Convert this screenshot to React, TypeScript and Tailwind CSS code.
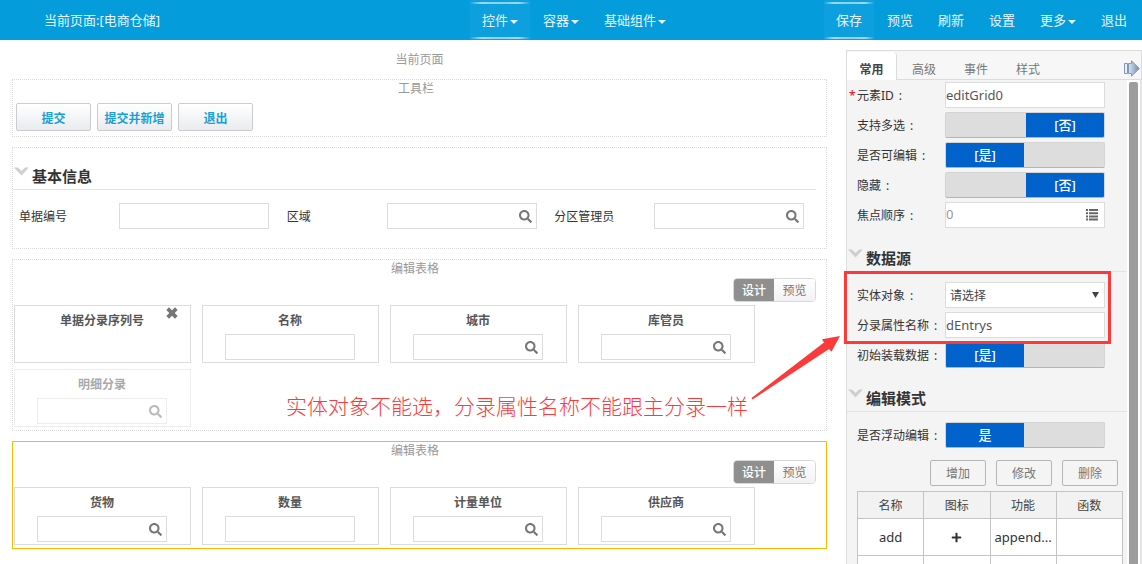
import React from "react";
import { FaSearch, FaPlus } from "react-icons/fa";

function Caret() {
  return (
    <svg className="mt-0.5 ml-0.5 h-1 w-2" viewBox="0 0 8 4" fill="currentColor" aria-hidden="true">
      <path d="M0 0H8L4 4Z" />
    </svg>
  );
}

function Chevron() {
  return (
    <svg className="mt-2 ml-px h-[9px] w-[15px] shrink-0" viewBox="0 0 15 9" fill="#cfcfcf" aria-hidden="true">
      <path d="M0 .5H4L7.500 4L11 .5H15L7.500 8.500Z" />
    </svg>
  );
}

function CrossIcon() {
  return (
    <svg className="h-3 w-3" viewBox="0 0 12 12" fill="currentColor" aria-hidden="true">
      <path d="M3 .3L6 3.300L9 .3L11.700 3L8.700 6L11.700 9L9 11.700L6 8.700L3 11.700L.3 9L3.300 6L.3 3Z" />
    </svg>
  );
}

function ListIcon() {
  return (
    <svg className="h-3 w-3 shrink-0" viewBox="0 0 12 12" fill="#666" aria-hidden="true">
      <path d="M0 0H2V2H0ZM3 0H12V2H3ZM0 3.200H2V5.200H0ZM3 3.200H12V5.200H3ZM0 6.400H2V8.400H0ZM3 6.400H12V8.400H3ZM0 9.600H2V11.600H0ZM3 9.600H12V11.600H3Z" />
    </svg>
  );
}

function NavItem({ label, active, caret }: { label: string; active?: boolean; caret?: boolean }) {
  return (
    <button
      type="button"
      className={
        active
          ? "relative flex h-10 items-center bg-[#0d9fde] px-3 pt-0.5 text-[#e6f5fc]"
          : "flex h-10 items-center px-3 pt-0.5 text-[#e6f5fc]"
      }
    >
      {active && (
        <>
          <span className="absolute inset-x-0 top-[2px] h-[2px] bg-linear-to-r from-transparent via-[#9fdcf7] via-20% to-transparent" />
          <span className="absolute inset-x-0 top-[2px] h-[2px] bg-linear-to-l from-transparent via-[#9fdcf7] via-20% to-transparent" />
          <span className="absolute inset-x-0 bottom-px h-[2px] bg-linear-to-r from-transparent via-[#9fdcf7] via-20% to-transparent" />
          <span className="absolute inset-x-0 bottom-px h-[2px] bg-linear-to-l from-transparent via-[#9fdcf7] via-20% to-transparent" />
        </>
      )}
      {label}
      {caret && <Caret />}
    </button>
  );
}

function Field({ label, lookup, width }: { label: string; lookup?: boolean; width: string }) {
  return (
    <div className={`flex h-[26px] items-center border border-[#dcdcdc] bg-white ${width}`}>
      <input aria-label={label} className="h-full w-full min-w-0 flex-1 bg-transparent px-1 outline-none" />
      {lookup && (
        <button type="button" aria-label={`${label}查询`} className="pr-1 text-[#777]">
          <FaSearch className="h-[13px] w-[13px]" />
        </button>
      )}
    </div>
  );
}

function Card({ title, kind, faded, closable }: { title: string; kind?: "text" | "lookup"; faded?: boolean; closable?: boolean }) {
  return (
    <div
      className={
        faded
          ? "relative flex h-[58px] w-[177px] flex-col items-center border border-[#dcdcdc] pr-px opacity-50"
          : "relative flex h-[58px] w-[177px] flex-col items-center border border-[#dcdcdc] pr-px"
      }
    >
      <div className="h-7 text-xs leading-[30px] font-bold text-[#555]">{title}</div>
      {kind && <Field label={title} lookup={kind === "lookup"} width="w-[130px]" />}
      {closable && (
        <button type="button" aria-label="删除列" className="absolute top-px right-3 text-[#777]">
          <CrossIcon />
        </button>
      )}
    </div>
  );
}

type Column = { title: string; kind?: "text" | "lookup"; faded?: boolean; closable?: boolean };

function EditGrid({ columns, selected }: { columns: Column[]; selected?: boolean }) {
  return (
    <section
      className={
        selected
          ? "mt-2.5 border border-[#fdb900] pr-2.5 pb-[3px] pl-px"
          : "mt-2.5 border border-dotted border-[#d8d8d8] pr-2.5 pb-[3px] pl-px"
      }
    >
      <div className="text-center text-xs leading-[18px] text-[#999]">编辑表格</div>
      <div className="flex justify-end">
        <div className="flex h-6 overflow-hidden rounded border border-[#d8d8d8] text-xs">
          <button type="button" className="w-10 bg-[#8f8f8f] pt-0.5 font-medium text-white">设计</button>
          <button type="button" className="w-[41px] bg-linear-to-b from-white to-[#f3f1f4] pt-0.5 text-[#777]">预览</button>
        </div>
      </div>
      <div className="mt-[3px] flex flex-wrap gap-x-[11px] gap-y-1.5">
        {columns.map((c) => (
          <Card key={c.title} {...c} />
        ))}
      </div>
    </section>
  );
}

function Row({ label, id, required, children }: { label: string; id: string; required?: boolean; children: React.ReactNode }) {
  return (
    <div className="mb-1 flex h-[26px] items-center">
      <label htmlFor={id} className="flex w-[98px] shrink-0 pt-0.5 text-[#333]">
        <span className="w-2.5 pl-0.5 text-red-600">{required ? "*" : ""}</span>
        <span className="whitespace-nowrap">{label}</span>
        <span className="ml-[5px]">:</span>
      </label>
      {children}
    </div>
  );
}

function Toggle({ id, on, text }: { id: string; on?: boolean; text: string }) {
  return (
    <button
      id={id}
      type="button"
      role="switch"
      aria-checked={!!on}
      className="flex h-[26px] w-40 overflow-hidden rounded-xs border border-[#d4d4d4] border-b-[#b4b4b4] bg-[#dddddd] text-[13px] leading-6 font-medium text-white"
    >
      {on ? (
        <span className="h-6 w-[78px] bg-[#0262cc]">{text}</span>
      ) : (
        <span className="ml-auto h-6 w-[78px] bg-[#0262cc]">{text}</span>
      )}
    </button>
  );
}

function PanelHeading({ title }: { title: string }) {
  return (
    <div className="mb-2.5 flex h-10 items-start border-b border-[#e3e3e3] pt-[9px]">
      <Chevron />
      <h2 className="ml-[3px] text-[15px] leading-[34px] font-bold text-[#333]">{title}</h2>
    </div>
  );
}

const inputClass = "h-[26px] w-40 border border-[#dcdcdc] bg-white text-[13px] text-[#555] outline-none";
const tabs = ["常用", "高级", "事件", "样式"];

function PropertyPanel() {
  return (
    <aside className="flex w-[296px] shrink-0 flex-col border-t border-l border-[#dcdcdc] bg-[#f7f7f7]">
      <div className="flex h-[29px] items-end border-r border-b border-[#dcdcdc]">
        {tabs.map((t, i) => (
          <button
            key={t}
            type="button"
            className={
              i === 0
                ? "-mb-px h-7 w-[50px] rounded-t border-r border-[#dcdcdc] bg-white pt-2 text-xs font-bold text-[#444]"
                : "-mb-px ml-0.5 h-7 w-[50px] pt-2 text-xs text-[#777]"
            }
          >
            {t}
          </button>
        ))}
        <button type="button" aria-label="收起" className="mr-px mb-0.5 ml-auto">
          <svg className="h-[17px] w-[17px]" viewBox="0 0 17 17" aria-hidden="true">
            <defs>
              <linearGradient id="arrow" x1="0" x2="1">
                <stop offset="0" stopColor="#d8e4f0" />
                <stop offset="1" stopColor="#6f8bae" />
              </linearGradient>
            </defs>
            <path d="M1.500 3.500H4.500V13.500H1.500Z" fill="#e3f0fb" stroke="#8497b5" />
            <path d="M5.500 3.500H8.500V.8L16.300 8.500L8.500 16.200V13.500H5.500Z" fill="url(#arrow)" stroke="#8497b5" />
          </svg>
        </button>
      </div>
      <div className="flex min-h-0 flex-1">
        <div className="min-w-0 flex-1 bg-[#f4f4f4] pt-0.5 text-xs">
          <Row label="元素ID" id="element-id" required>
            <input id="element-id" defaultValue="editGrid0" className={inputClass} />
          </Row>
          <Row label="支持多选" id="multi">
            <Toggle id="multi" text="[否]" />
          </Row>
          <Row label="是否可编辑" id="editable">
            <Toggle id="editable" on text="[是]" />
          </Row>
          <Row label="隐藏" id="hidden">
            <Toggle id="hidden" text="[否]" />
          </Row>
          <Row label="焦点顺序" id="order">
            <div className="flex h-[26px] w-40 items-center border border-[#dcdcdc] bg-white pr-1.5">
              <input id="order" defaultValue="0" className="min-w-0 flex-1 bg-transparent text-[13px] text-[#999] outline-none" />
              <ListIcon />
            </div>
          </Row>
          <PanelHeading title="数据源" />
          <Row label="实体对象" id="entity">
            <div className="relative">
              <select id="entity" className="h-[26px] w-40 appearance-none border border-[#dcdcdc] bg-white pt-0.5 pl-1 text-xs text-[#444] outline-none">
                <option>请选择</option>
              </select>
              <svg className="pointer-events-none absolute top-[10px] right-1.5 h-1.5 w-[7px]" viewBox="0 0 7 6" fill="#444" aria-hidden="true">
                <path d="M0 0H7L3.5 6Z" />
              </svg>
            </div>
          </Row>
          <Row label="分录属性名称" id="entry-name">
            <input id="entry-name" defaultValue="dEntrys" className={inputClass} />
          </Row>
          <Row label="初始装载数据" id="preload">
            <Toggle id="preload" on text="[是]" />
          </Row>
          <PanelHeading title="编辑模式" />
          <Row label="是否浮动编辑" id="floating">
            <Toggle id="floating" on text="是" />
          </Row>
          <div className="mt-3 mr-[9px] flex justify-end gap-2.5">
            {["增加", "修改", "删除"].map((b) => (
              <button key={b} type="button" className="h-[26px] w-14 rounded-xs border border-[#b5b5b5] pt-0.5 text-xs text-[#777]">
                {b}
              </button>
            ))}
          </div>
          <table className="mt-[5px] ml-2.5 w-[266px] table-fixed border-collapse text-center text-[#333]">
            <thead>
              <tr className="h-[27px] bg-[#f2f2f2]">
                {["名称", "图标", "功能", "函数"].map((h) => (
                  <th key={h} className="border border-[#c4c4c4] pt-0.5 font-normal text-[#444]">{h}</th>
                ))}
              </tr>
            </thead>
            <tbody className="bg-white text-[13px]">
              <tr className="h-[37px]">
                <td className="border border-[#c4c4c4] pt-0.5">add</td>
                <td className="border border-[#c4c4c4]">
                  <FaPlus className="mx-auto h-[11px] w-[11px]" />
                </td>
                <td className="border border-[#c4c4c4] pt-0.5">append...</td>
                <td className="border border-[#c4c4c4]" />
              </tr>
              <tr className="h-[37px]">
                <td className="border border-[#c4c4c4]" />
                <td className="border border-[#c4c4c4]" />
                <td className="border border-[#c4c4c4]" />
                <td className="border border-[#c4c4c4]" />
              </tr>
            </tbody>
          </table>
        </div>
        <div className="w-[13px] shrink-0 bg-white pt-0.5 pl-0.5">
          <div className="h-full w-[9px] rounded-t-xs bg-[#9d9d9d]" />
        </div>
        <div className="w-0.5 shrink-0 bg-[#e4e4e4]" />
      </div>
    </aside>
  );
}

function Annotation() {
  return (
    <div className="pointer-events-none">
      <div className="absolute top-[271px] right-[31px] h-[73px] w-[267px] border-3 border-[#fb3b3b]" />
      <svg className="absolute top-[334px] right-[301px] h-[66px] w-[92px]" viewBox="0 0 92 66" fill="#fb3b3b" aria-hidden="true">
        <path d="M91 2L73 5.300L75 8.500L2.500 64L3.500 65.500L80 15L82.500 17.800Z" />
      </svg>
      <p className="absolute top-[390px] right-[394px] text-[21px] leading-8 font-light whitespace-nowrap text-[#fb3b3b]">
        实体对象不能选，分录属性名称不能跟主分录一样
      </p>
    </div>
  );
}

export default function App() {
  return (
    <div className="relative flex h-screen flex-col overflow-hidden bg-white font-['Noto_Sans','Noto_Sans_CJK_SC',sans-serif] text-xs text-[#333]">
      <header className="flex h-10 shrink-0 items-center justify-between bg-[#049cdb] pr-[3px] pl-11 text-[13px] text-[#e6f5fc]">
        <span className="w-[426px] pt-0.5">当前页面:[电商仓储]</span>
        <nav className="flex flex-1 gap-px">
          <NavItem label="控件" active caret />
          <NavItem label="容器" caret />
          <NavItem label="基础组件" caret />
        </nav>
        <nav className="flex gap-px">
          <NavItem label="保存" active />
          <NavItem label="预览" />
          <NavItem label="刷新" />
          <NavItem label="设置" />
          <NavItem label="更多" caret />
          <NavItem label="退出" />
        </nav>
      </header>
      <div className="flex min-h-0 flex-1 pt-2.5">
        <main className="min-w-0 flex-1 pr-[19px] pl-3">
          <h1 className="h-[29px] text-center text-xs leading-5 text-[#999]">当前页面</h1>
          <section className="h-[58px] border border-dotted border-[#d8d8d8] pr-2.5 pl-[3px]">
            <div className="text-center leading-[18px] text-[#999]">工具栏</div>
            <div className="mt-[5px] flex gap-1.5">
              {["提交", "提交并新增", "退出"].map((b) => (
                <button
                  key={b}
                  type="button"
                  className="h-7 w-[75px] rounded-xs border border-[#c9ccd0] bg-linear-to-b from-white to-[#e9ebee] pt-1 text-xs font-bold whitespace-nowrap text-[#1a9fd6]"
                >
                  {b}
                </button>
              ))}
            </div>
          </section>
          <section className="mt-2.5 h-[102px] border border-dotted border-[#d8d8d8] pr-2.5">
            <div className="flex h-[42px] items-start border-b border-[#e3e3e3] pt-[11px]">
              <Chevron />
              <h2 className="ml-[3px] text-[15px] leading-[34px] font-bold text-[#333]">基本信息</h2>
            </div>
            <div className="mt-[13px] flex">
              {[
                { label: "单据编号", lookup: false },
                { label: "区域", lookup: true },
                { label: "分区管理员", lookup: true },
              ].map((f) => (
                <div key={f.label} className="flex w-[268px] items-center pl-1.5">
                  <span className="w-[100px] pt-0.5">{f.label}</span>
                  <Field label={f.label} lookup={f.lookup} width="w-[150px]" />
                </div>
              ))}
            </div>
          </section>
          <EditGrid
            columns={[
              { title: "单据分录序列号", closable: true },
              { title: "名称", kind: "text" },
              { title: "城市", kind: "lookup" },
              { title: "库管员", kind: "lookup" },
              { title: "明细分录", kind: "lookup", faded: true },
            ]}
          />
          <EditGrid
            selected
            columns={[
              { title: "货物", kind: "lookup" },
              { title: "数量", kind: "text" },
              { title: "计量单位", kind: "lookup" },
              { title: "供应商", kind: "lookup" },
            ]}
          />
        </main>
        <PropertyPanel />
      </div>
      <Annotation />
    </div>
  );
}
